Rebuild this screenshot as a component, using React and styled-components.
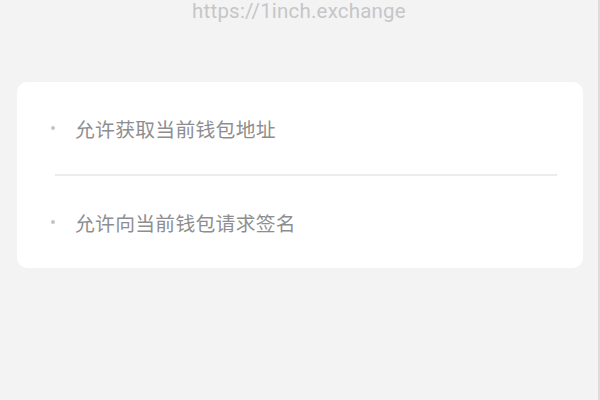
import React from "react";
import styled, { createGlobalStyle } from "styled-components";

const Global = createGlobalStyle`
  html, body { margin: 0; padding: 0; background: #f3f3f4; }
  body { font-family: Roboto, "Noto Sans CJK SC", sans-serif; }
`;

const Page = styled.div`
  width: 598px;
  height: 400px;
  border-right: 2px solid #dcdcdc;
  background: #f3f3f4;
  display: flex;
  flex-direction: column;
  align-items: center;
  overflow: hidden;
`;

const Url = styled.div`
  font-family: Roboto, sans-serif;
  font-size: 20.5px;
  line-height: 23px;
  color: #c6c6c8;
  letter-spacing: 0.2px;
`;

const Card = styled.div`
  margin-top: 59px;
  margin-left: 2px;
  width: 566px;
  height: 186px;
  background: #ffffff;
  border-radius: 10px;
  display: flex;
  flex-direction: column;
  box-sizing: border-box;
  padding: 0 26px 0 34px;
`;

const Row = styled.div`
  flex: 1;
  display: flex;
  align-items: center;
  gap: 20px;
`;

const Bullet = styled.span`
  width: 4px;
  height: 4px;
  border-radius: 50%;
  background: #c4c4c4;
  flex: none;
`;

const Label = styled.span`
  font-family: "Noto Sans CJK SC", sans-serif;
  font-size: 19.8px;
  color: #8e8e90;
  letter-spacing: 0.3px;
`;

const Divider = styled.div`
  height: 2px;
  background: #ececec;
  margin-left: 4px;
`;

export default function App() {
  return (
    <>
      <Global />
      <Page>
        <Url>https://1inch.exchange</Url>
        <Card>
          <Row>
            <Bullet />
            <Label>允许获取当前钱包地址</Label>
          </Row>
          <Divider />
          <Row>
            <Bullet />
            <Label>允许向当前钱包请求签名</Label>
          </Row>
        </Card>
      </Page>
    </>
  );
}
